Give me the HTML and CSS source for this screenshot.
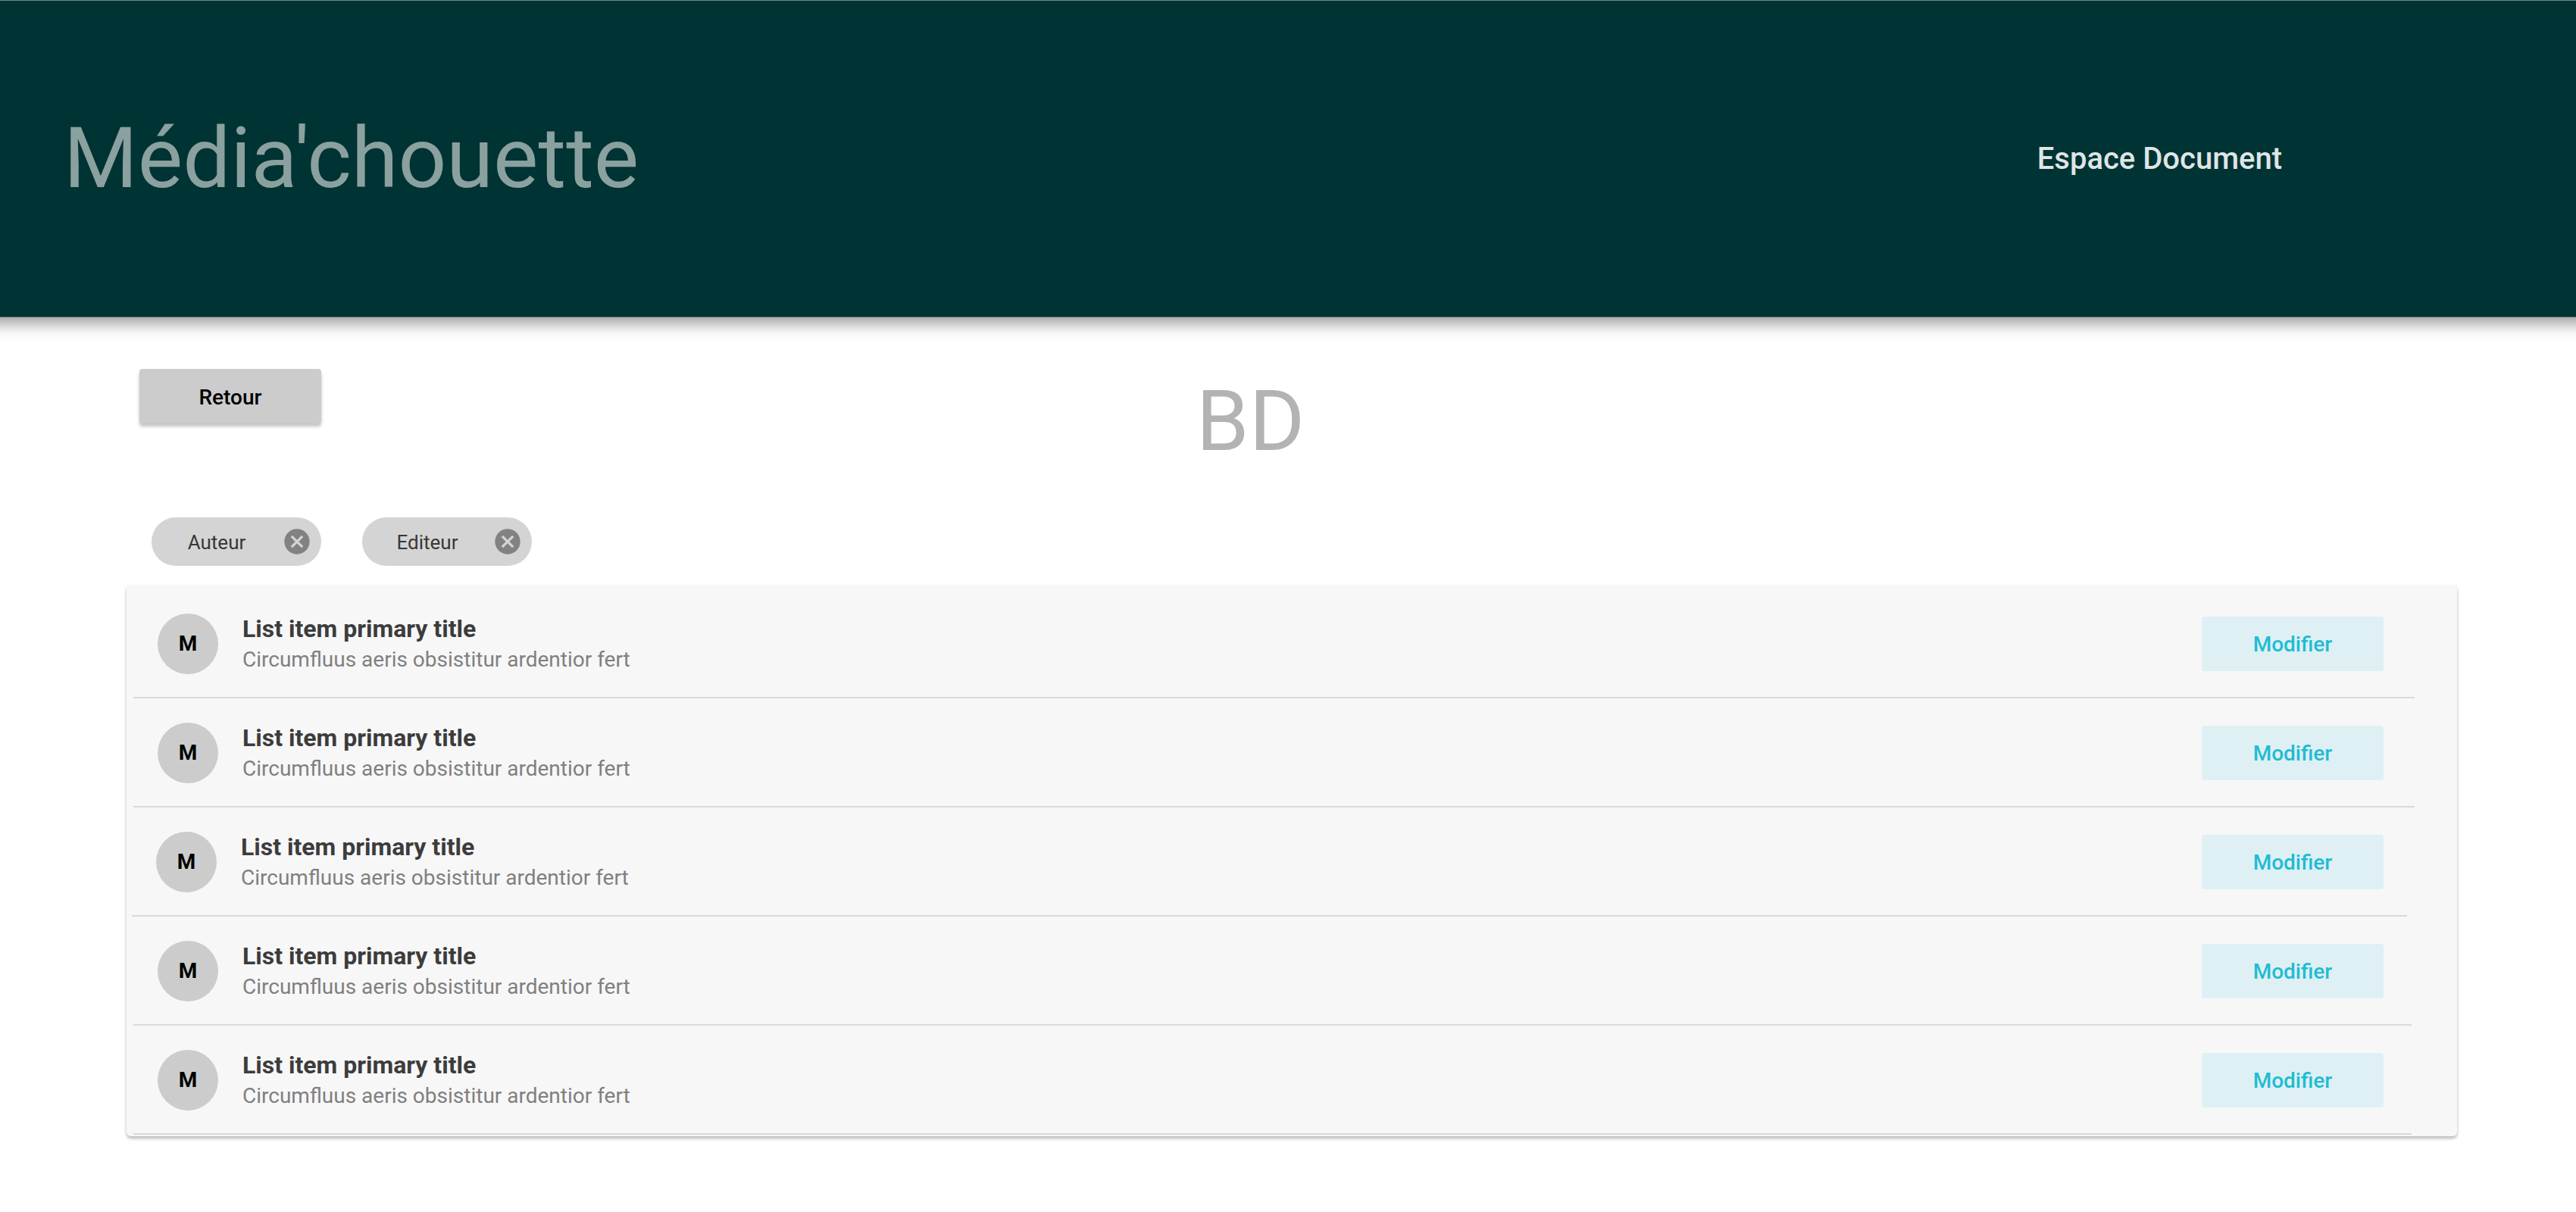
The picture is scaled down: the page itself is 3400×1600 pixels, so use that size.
FILE: index.html
```html
<!DOCTYPE html>
<html lang="fr">
<head>
<meta charset="utf-8">
<meta name="viewport" content="width=device-width, initial-scale=1">
<title>Média'chouette</title>
<link rel="stylesheet" href="styles.css">
</head>
<body>
<header class="banner">
  <h1 class="brand">Média'chouette</h1>
  <a class="space-link" href="#">Espace Document</a>
</header>
<main class="page">
  <div class="heading">
    <button class="back" type="button">Retour</button>
    <h2 class="title">BD</h2>
  </div>
  <div class="chips">
    <button class="chip" type="button"><span class="chip-label">Auteur</span><svg class="chip-icon" viewBox="0 0 24 24" aria-hidden="true"><path d="M12 2C6.47 2 2 6.47 2 12s4.47 10 10 10 10-4.47 10-10S17.53 2 12 2zm5 13.59L15.59 17 12 13.41 8.41 17 7 15.59 10.59 12 7 8.41 8.41 7 12 10.59 15.59 7 17 8.41 13.41 12 17 15.59z"/></svg></button>
    <button class="chip" type="button"><span class="chip-label">Editeur</span><svg class="chip-icon" viewBox="0 0 24 24" aria-hidden="true"><path d="M12 2C6.47 2 2 6.47 2 12s4.47 10 10 10 10-4.47 10-10S17.53 2 12 2zm5 13.59L15.59 17 12 13.41 8.41 17 7 15.59 10.59 12 7 8.41 8.41 7 12 10.59 15.59 7 17 8.41 13.41 12 17 15.59z"/></svg></button>
  </div>
  <ul class="list">
    <li class="item"><span class="avatar">M</span><div class="text"><h3 class="primary">List item primary title</h3><p class="secondary">Circumfluus aeris obsistitur ardentior fert</p></div><button class="edit" type="button">Modifier</button></li>
    <li class="item"><span class="avatar">M</span><div class="text"><h3 class="primary">List item primary title</h3><p class="secondary">Circumfluus aeris obsistitur ardentior fert</p></div><button class="edit" type="button">Modifier</button></li>
    <li class="item item-wide"><span class="avatar">M</span><div class="text"><h3 class="primary">List item primary title</h3><p class="secondary">Circumfluus aeris obsistitur ardentior fert</p></div><button class="edit" type="button">Modifier</button></li>
    <li class="item item-short"><span class="avatar">M</span><div class="text"><h3 class="primary">List item primary title</h3><p class="secondary">Circumfluus aeris obsistitur ardentior fert</p></div><button class="edit" type="button">Modifier</button></li>
    <li class="item item-short"><span class="avatar">M</span><div class="text"><h3 class="primary">List item primary title</h3><p class="secondary">Circumfluus aeris obsistitur ardentior fert</p></div><button class="edit" type="button">Modifier</button></li>
  </ul>
</main>
</body>
</html>
```
FILE: styles.css
```css
* {
  box-sizing: border-box;
}

body {
  margin: 0;
  background: #fff;
  font-family: Roboto, sans-serif;
  font-size: 28px;
}

h1, h2, h3, p, ul {
  margin: 0;
  padding: 0;
}

button {
  border: 0;
  padding: 0;
  font: inherit;
  cursor: pointer;
}

.banner {
  display: flex;
  align-items: center;
  justify-content: space-between;
  padding: 141px 388px 142px 84px;
  border-top: 1px solid #6b8a89;
  border-bottom: 1px solid #4c706f;
  background: #003333;
  box-shadow: 0 -12px 20px 20px rgba(0, 0, 0, 0.4);
}

.brand {
  color: #8aa1a0;
  font-size: 112px;
  font-weight: 400;
  line-height: 134px;
}

.space-link {
  color: #dfe5e5;
  font-size: 40px;
  font-weight: 500;
  text-decoration: none;
}

.page {
  padding: 68px 157px 100px 167px;
}

.heading {
  display: grid;
  grid-template-columns: 240px 1fr 240px;
  align-items: start;
  padding: 0 126px 0 17px;
}

.back {
  height: 72px;
  padding-top: 2px;
  border-radius: 4px;
  background: #ccc;
  box-shadow: 0 4px 4px rgba(0, 0, 0, 0.24);
  color: #000;
  font-weight: 500;
}

.title {
  color: #b3b3b3;
  font-size: 112px;
  font-weight: 400;
  line-height: 138px;
  text-align: center;
}

.chips {
  display: flex;
  gap: 54px;
  padding: 58px 33px 25px;
}

.chip {
  display: flex;
  align-items: center;
  width: 224px;
  height: 64px;
  padding-right: 12px;
  border-radius: 32px;
  background: #d4d4d4;
  color: #383838;
  font-size: 26px;
}

.chip-label {
  flex: 1;
  padding-top: 2px;
}

.chip-icon {
  width: 40px;
  height: 40px;
  fill: #828282;
}

.list {
  padding: 6px 56px 2px 9px;
  border-radius: 6px;
  background: #f7f7f7;
  box-shadow: 0 3px 4px rgba(0, 0, 0, 0.28);
  list-style: none;
}

.item {
  display: flex;
  align-items: center;
  gap: 32px;
  padding: 32px 41px 30px 32px;
  border-bottom: 2px solid #d9d9d9;
}

.item-wide {
  margin: 0 10px 0 -2px;
  padding-right: 31px;
}

.item-short {
  margin-right: 4px;
  padding-right: 37px;
}

.avatar {
  width: 80px;
  border-radius: 50%;
  background: #ccc;
  color: #000;
  font-weight: 700;
  line-height: 80px;
  text-align: center;
}

.text {
  flex: 1;
}

.primary {
  color: #3c3c3c;
  font-size: 32px;
  font-weight: 700;
  line-height: 40px;
}

.secondary {
  padding-top: 2px;
  color: #808080;
  line-height: 38px;
}

.edit {
  width: 240px;
  height: 72px;
  border-radius: 4px;
  background: #def0f4;
  color: #1fbcd3;
  font-weight: 500;
}
```
